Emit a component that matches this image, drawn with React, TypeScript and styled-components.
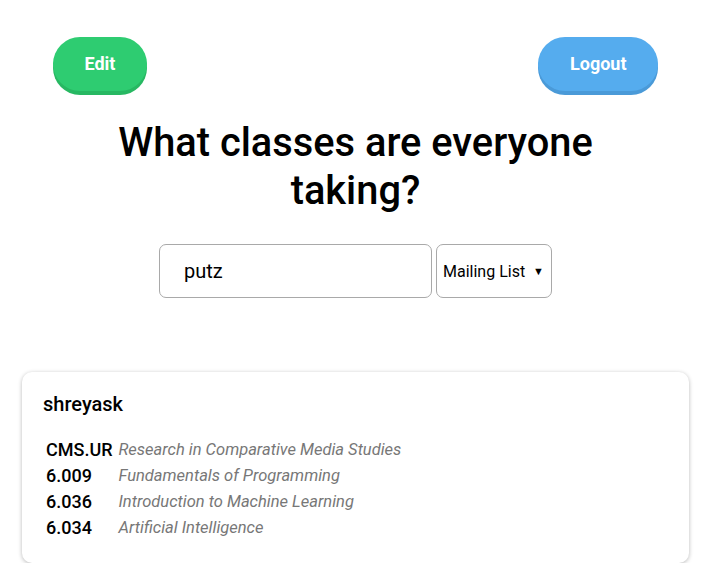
import React from "react";
import styled, { createGlobalStyle } from "styled-components";

const GlobalStyle = createGlobalStyle`
  body {
    margin: 0;
    background: #ffffff;
    font-family: Roboto, "Liberation Sans", sans-serif;
    color: #000;
  }
`;

const Page = styled.div`
  display: flex;
  flex-direction: column;
  padding: 37px 22px 0;
`;

const TopBar = styled.div`
  display: flex;
  justify-content: space-between;
  align-items: flex-start;
  padding: 0 31px;
`;

const PillButton = styled.button<{ $color: string; $shade: string }>`
  height: 54px;
  padding: 0 31.5px;
  border: none;
  border-radius: 27px;
  background: ${(p) => p.$color};
  box-shadow: 0 4px 0 ${(p) => p.$shade};
  color: #fff;
  font-family: Roboto, sans-serif;
  font-size: 18px;
  font-weight: 700;
  line-height: 52px;
  cursor: pointer;
`;

const Title = styled.h1`
  margin: 28px auto 0;
  max-width: 520px;
  text-align: center;
  font-size: 39.8px;
  font-weight: 500;
  line-height: 48px;
`;

const SearchRow = styled.form`
  display: flex;
  justify-content: center;
  gap: 4px;
  margin-top: 29px;
`;

const SearchInput = styled.input`
  box-sizing: border-box;
  width: 273px;
  height: 54px;
  padding: 0 12px 0 24px;
  border: 1px solid #a9a9a9;
  border-radius: 7px;
  font-family: Roboto, sans-serif;
  font-size: 20px;
  color: #000;
  outline: none;
`;

const SelectWrap = styled.div`
  position: relative;
  width: 116px;
  height: 54px;
`;

const ListSelect = styled.select`
  box-sizing: border-box;
  width: 100%;
  height: 100%;
  padding: 0 20px 0 6px;
  border: 1px solid #a9a9a9;
  border-radius: 7px;
  background: #fff;
  appearance: none;
  font-family: Roboto, sans-serif;
  font-size: 16px;
  color: #000;
  outline: none;
`;

const Arrow = styled.span`
  position: absolute;
  right: 8px;
  top: 50%;
  transform: translateY(-50%);
  font-size: 11px;
  line-height: 1;
  color: #000;
  pointer-events: none;
`;

const Card = styled.div`
  margin-top: 74px;
  padding: 21px 20px 22px 21px;
  border-radius: 10px;
  background: #fff;
  box-shadow: 0 1px 4px rgba(0, 0, 0, 0.28);
`;

const UserName = styled.div`
  font-size: 20px;
  font-weight: 500;
  line-height: 23px;
`;

const ClassList = styled.div`
  display: grid;
  grid-template-columns: auto 1fr;
  column-gap: 6px;
  margin-top: 21px;
  padding-left: 3px;
`;

const Code = styled.span`
  font-size: 18px;
  font-weight: 500;
  line-height: 26px;
`;

const ClassName = styled.span`
  font-size: 16.5px;
  font-style: italic;
  color: #777;
  line-height: 26px;
`;

const classes = [
  ["CMS.UR", "Research in Comparative Media Studies"],
  ["6.009", "Fundamentals of Programming"],
  ["6.036", "Introduction to Machine Learning"],
  ["6.034", "Artificial Intelligence"],
];

export default function App() {
  return (
    <>
      <GlobalStyle />
      <Page>
        <TopBar>
          <PillButton $color="#2ecc71" $shade="#27b862">
            Edit
          </PillButton>
          <PillButton $color="#55acee" $shade="#4a9ad8">
            Logout
          </PillButton>
        </TopBar>
        <Title>What classes are everyone taking?</Title>
        <SearchRow onSubmit={(e) => e.preventDefault()}>
          <SearchInput defaultValue="putz" />
          <SelectWrap>
            <ListSelect defaultValue="mailing">
              <option value="mailing">Mailing List</option>
              <option value="user">User</option>
            </ListSelect>
            <Arrow>▼</Arrow>
          </SelectWrap>
        </SearchRow>
        <Card>
          <UserName>shreyask</UserName>
          <ClassList>
            {classes.map(([code, name]) => (
              <React.Fragment key={code}>
                <Code>{code}</Code>
                <ClassName>{name}</ClassName>
              </React.Fragment>
            ))}
          </ClassList>
        </Card>
      </Page>
    </>
  );
}
